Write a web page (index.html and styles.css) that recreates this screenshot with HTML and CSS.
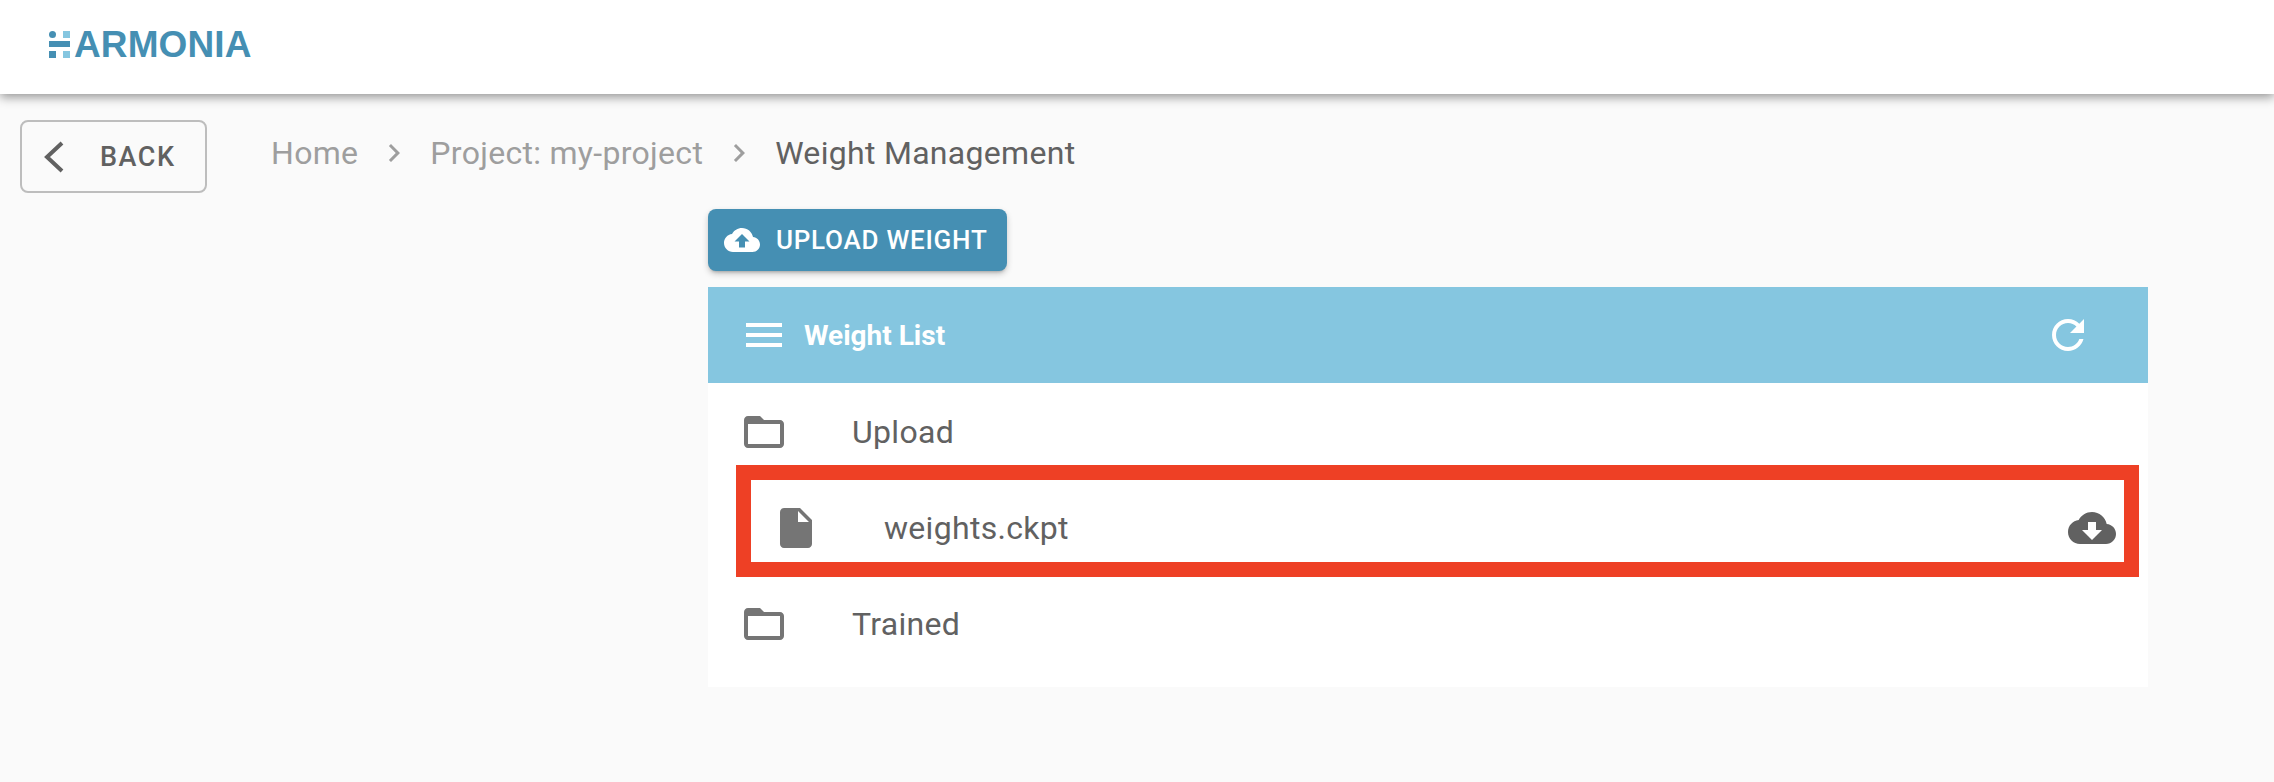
FILE: index.html
```html
<!DOCTYPE html>
<html lang="en">
<head>
  <meta charset="UTF-8" />
  <title>Weight Management</title>
  <link rel="stylesheet" href="styles.css">
</head>
<body>

  <header class="topbar">
    <div class="logo">
      <div class="logo-mark">
        <span class="dot dark round"></span><span class="dot light"></span>
        <span class="dash"></span>
        <span class="dot dark"></span><span class="dot light"></span>
      </div>
      <span class="logo-text">ARMONIA</span>
    </div>
  </header>

  <div class="navrow">
    <button class="back-btn">
      <svg class="back-icon" viewBox="0 0 20 32"><path d="M18 2L3 16l15 14" /></svg>
      BACK
    </button>
    <nav class="crumbs">
      <span>Home</span>
      <svg class="crumb-sep" viewBox="0 0 24 24"><path d="M10 6L8.59 7.41 13.17 12l-4.58 4.59L10 18l6-6z"/></svg>
      <span>Project: my-project</span>
      <svg class="crumb-sep" viewBox="0 0 24 24"><path d="M10 6L8.59 7.41 13.17 12l-4.58 4.59L10 18l6-6z"/></svg>
      <span class="current">Weight Management</span>
    </nav>
  </div>

  <main class="content">
    <button class="upload-btn">
      <svg class="upload-icon" viewBox="0 0 24 24"><path d="M19.35 10.04C18.67 6.59 15.64 4 12 4 9.11 4 6.6 5.64 5.35 8.04 2.34 8.36 0 10.91 0 14c0 3.31 2.69 6 6 6h13c2.76 0 5-2.24 5-5 0-2.64-2.05-4.78-4.65-4.96zM14 13v4h-4v-4H7l5-5 5 5h-3z"/></svg>
      UPLOAD WEIGHT
    </button>

    <section class="panel">
      <div class="panel-head">
        <svg class="icon" viewBox="0 0 24 24"><path d="M3 18h18v-2H3v2zm0-5h18v-2H3v2zm0-7v2h18V6H3z"/></svg>
        <span class="panel-title">Weight List</span>
        <svg class="icon refresh" viewBox="0 0 24 24"><path d="M17.65 6.35C16.2 4.9 14.21 4 12 4c-4.42 0-7.99 3.58-7.99 8s3.57 8 7.99 8c3.73 0 6.84-2.55 7.73-6h-2.08c-.82 2.33-3.04 4-5.65 4-3.31 0-6-2.69-6-6s2.69-6 6-6c1.66 0 3.14.69 4.22 1.78L13 11h7V4l-2.35 2.35z"/></svg>
      </div>

      <ul class="tree">
        <li class="row">
          <svg class="icon" viewBox="0 0 24 24"><path d="M20 6h-8l-2-2H4c-1.1 0-1.99.9-1.99 2L2 18c0 1.1.9 2 2 2h16c1.1 0 2-.9 2-2V8c0-1.1-.9-2-2-2zm0 12H4V8h16v10z"/></svg>
          <span class="row-text">Upload</span>
        </li>
        <li class="row nested">
          <svg class="icon" viewBox="0 0 24 24"><path d="M6 2c-1.1 0-1.99.9-1.99 2L4 20c0 1.1.89 2 1.99 2H18c1.1 0 2-.9 2-2V8l-6-6H6zm7 7V3.5L18.5 9H13z"/></svg>
          <span class="row-text">weights.ckpt</span>
          <svg class="icon download" viewBox="0 0 24 24"><path d="M19.35 10.04C18.67 6.59 15.64 4 12 4 9.11 4 6.6 5.64 5.35 8.04 2.34 8.36 0 10.91 0 14c0 3.31 2.69 6 6 6h13c2.76 0 5-2.24 5-5 0-2.64-2.05-4.78-4.65-4.96zM17 13l-5 5-5-5h3V9h4v4h3z"/></svg>
          <div class="highlight"></div>
        </li>
        <li class="row">
          <svg class="icon" viewBox="0 0 24 24"><path d="M20 6h-8l-2-2H4c-1.1 0-1.99.9-1.99 2L2 18c0 1.1.9 2 2 2h16c1.1 0 2-.9 2-2V8c0-1.1-.9-2-2-2zm0 12H4V8h16v10z"/></svg>
          <span class="row-text">Trained</span>
        </li>
      </ul>
    </section>
  </main>

</body>
</html>
```

FILE: styles.css
```css
body {
  margin: 0;
  height: 782px;
  overflow: hidden;
  background: #fafafa;
  font-family: Roboto, sans-serif;
  color: #616161;
}

.topbar {
  height: 94px;
  background: #fff;
  box-shadow: 0 3px 10px rgba(0, 0, 0, 0.42);
  display: flex;
  align-items: center;
  padding-left: 49px;
  padding-bottom: 6px;
  box-sizing: border-box;
}

.logo {
  display: flex;
  align-items: center;
  gap: 4px;
}

.logo-mark {
  width: 21px;
  display: grid;
  grid-template-columns: 7px 7px;
  justify-content: space-between;
  row-gap: 3.5px;
}

.dot {
  width: 7px;
  height: 7px;
}

.dot.dark { background: #458fb3; }
.dot.light { background: #85c6e0; }
.dot.round { border-radius: 50%; }

.dash {
  grid-column: 1 / 3;
  height: 6px;
  background: #458fb3;
}

.logo-text {
  font-family: "Liberation Sans", sans-serif;
  font-weight: 700;
  font-size: 37px;
  line-height: 37px;
  letter-spacing: 0.1px;
  color: #458fb3;
}

.navrow {
  display: flex;
  align-items: center;
  padding: 26px 0 0 20px;
}

.back-btn {
  width: 187px;
  height: 73px;
  box-sizing: border-box;
  display: flex;
  align-items: center;
  gap: 36px;
  padding: 0 0 0 22px;
  background: transparent;
  border: 2px solid #bdbdbd;
  border-radius: 8px;
  color: #616161;
  font-family: inherit;
  font-size: 27px;
  font-weight: 500;
  letter-spacing: 1.5px;
}

.back-icon {
  width: 20px;
  height: 32px;
  fill: none;
  stroke: #616161;
  stroke-width: 4;
}

.crumbs {
  display: flex;
  align-items: center;
  margin-left: 64px;
  margin-top: -8px;
  font-size: 32px;
  letter-spacing: 0.3px;
  color: #9e9e9e;
}

.crumbs .current {
  color: #616161;
}

.crumb-sep {
  width: 36px;
  height: 36px;
  margin: 0 18px;
  fill: #9e9e9e;
}

.content {
  width: 1440px;
  margin: 16px 0 0 708px;
}

.upload-btn {
  height: 62px;
  width: 299px;
  box-sizing: border-box;
  display: flex;
  align-items: center;
  gap: 16px;
  padding: 0 0 0 16px;
  background: #458fb3;
  border: none;
  border-radius: 8px;
  box-shadow: 0 3px 3px -2px rgba(0, 0, 0, 0.2), 0 3px 6px rgba(0, 0, 0, 0.2);
  color: #fff;
  font-family: inherit;
  font-size: 26px;
  font-weight: 500;
  letter-spacing: 0.75px;
}

.upload-icon {
  width: 36px;
  height: 36px;
  fill: #fff;
}

.panel {
  margin-top: 16px;
  background: #fff;
}

.panel-head {
  height: 96px;
  display: flex;
  align-items: center;
  gap: 16px;
  padding: 0 56px 0 32px;
  background: #85c6e0;
  color: #fff;
}

.panel-head .icon {
  fill: #fff;
}

.panel-title {
  font-size: 28px;
  font-weight: 700;
}

.refresh {
  margin-left: auto;
}

.icon {
  width: 48px;
  height: 48px;
  flex-shrink: 0;
  fill: #757575;
}

.tree {
  list-style: none;
  margin: 0;
  padding: 1px 0 15px;
}

.row {
  position: relative;
  height: 96px;
  display: flex;
  align-items: center;
  gap: 64px;
  padding: 0 32px;
}

.row.nested {
  padding-left: 64px;
}

.row-text {
  font-size: 32px;
  letter-spacing: 0.3px;
}

.download {
  margin-left: auto;
  fill: #616161;
}

.highlight {
  position: absolute;
  left: 28px;
  right: 9px;
  top: -15px;
  height: 112px;
  box-sizing: border-box;
  border: 15px solid #ee4025;
}
```
